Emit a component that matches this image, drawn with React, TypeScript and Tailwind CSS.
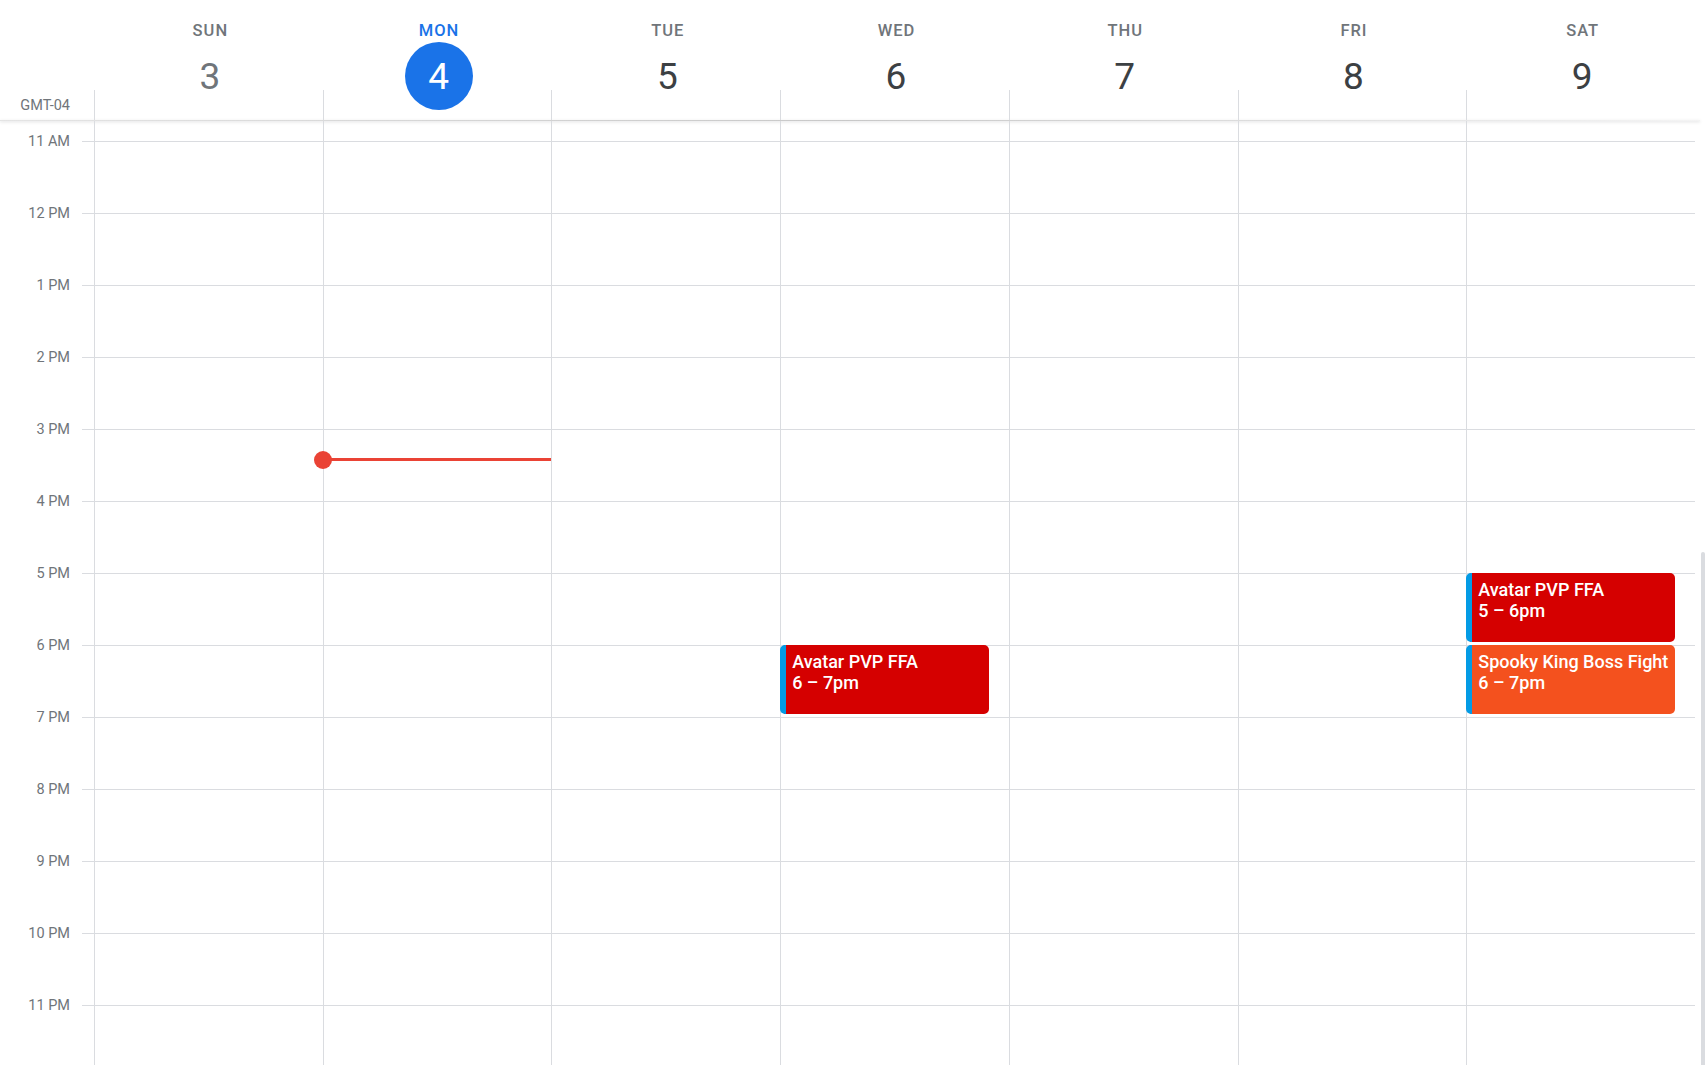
import React from "react";

type Ev = { title: string; time: string; startRow: number; color: string };

const days: { name: string; num: number; today?: boolean; past?: boolean; events: Ev[]; now?: boolean }[] = [
  { name: "SUN", num: 3, past: true, events: [] },
  { name: "MON", num: 4, today: true, events: [], now: true },
  { name: "TUE", num: 5, events: [] },
  { name: "WED", num: 6, events: [{ title: "Avatar PVP FFA", time: "6 – 7pm", startRow: 7, color: "bg-[#d50000]" }] },
  { name: "THU", num: 7, events: [] },
  { name: "FRI", num: 8, events: [] },
  {
    name: "SAT",
    num: 9,
    events: [
      { title: "Avatar PVP FFA", time: "5 – 6pm", startRow: 6, color: "bg-[#d50000]" },
      { title: "Spooky King Boss Fight", time: "6 – 7pm", startRow: 7, color: "bg-[#f4511e]" },
    ],
  },
];

const hours = ["11 AM", "12 PM", "1 PM", "2 PM", "3 PM", "4 PM", "5 PM", "6 PM", "7 PM", "8 PM", "9 PM", "10 PM", "11 PM"];

const eventTops: Record<number, string> = {
  6: "top-[452px]",
  7: "top-[524px]",
};

export default function App() {
  return (
    <div className="relative h-[1065px] w-[1705px] overflow-hidden bg-white font-['Roboto',sans-serif]">
      {/* Header */}
      <div className="flex h-[120px]">
        <div className="flex w-[94px] shrink-0 flex-col justify-end pb-[5px] pr-[24px] text-right text-[14.5px] leading-[18px] text-[#70757a]">
          GMT-04
        </div>
        <div className="flex w-[1601px] shrink-0">
          {days.map((d) => (
            <div key={d.name} className="flex flex-1 flex-col">
              <div className="flex h-[90px] flex-col items-center pl-[3px] pt-[21px]">
                <div
                  className={`pl-[1px] text-[16.5px] font-medium leading-[20px] tracking-[1px] ${
                    d.today ? "text-[#1a73e8]" : "text-[#70757a]"
                  }`}
                >
                  {d.name}
                </div>
                <div
                  className={`mt-[1px] flex h-[68px] w-[68px] shrink-0 items-center justify-center rounded-full text-[37px] leading-none ${
                    d.today ? "bg-[#1a73e8] text-white" : d.past ? "text-[#70757a]" : "text-[#3c4043]"
                  }`}
                >
                  {d.num}
                </div>
              </div>
              <div className="h-[30px] border-l border-[#dadce0]" />
            </div>
          ))}
        </div>
      </div>
      <div className="h-[1px] w-[1700px] bg-gradient-to-r from-[#e4e4e4] via-[#c8c8c8] to-[#f4f4f4] shadow-[0_1px_3px_rgba(60,64,67,0.25)]" />

      {/* Body */}
      <div className="flex h-[944px] overflow-hidden">
        <div className="w-[94px] shrink-0 pt-[20px]">
          {hours.map((h) => (
            <div key={h} className="relative flex h-[72px] items-start">
              <div className="w-[70px] translate-y-[-8px] text-right text-[14.5px] leading-[18px] text-[#70757a]">{h}</div>
              <div className="ml-[12px] h-[1px] flex-1 bg-[#dadce0]" />
            </div>
          ))}
        </div>
        <div className="relative w-[1601px] shrink-0 pt-[20px]">
          {hours.map((h) => (
            <div key={h} className="h-[72px] border-t border-[#dadce0]" />
          ))}
          <div className="absolute inset-0 flex">
            {days.map((d) => (
              <div key={d.name} className="relative flex-1 border-l border-[#dadce0]">
                {d.events.map((e) => (
                  <div
                    key={e.title + e.time}
                    className={`absolute left-[-1px] ${eventTops[e.startRow]} h-[69px] w-[209px] rounded-[5px] border-l-[6px] border-[#039be5] ${e.color} pl-[6px] pt-[6px] text-[18px] font-medium leading-[21px] text-white`}
                  >
                    <div className="whitespace-nowrap">{e.title}</div>
                    <div className="whitespace-nowrap">{e.time}</div>
                  </div>
                ))}
                {d.now && (
                  <>
                    <div className="absolute left-0 right-0 top-[337px] h-[3px] bg-[#ea4335]" />
                    <div className="absolute left-[-10px] top-[330px] h-[18px] w-[18px] rounded-full bg-[#ea4335]" />
                  </>
                )}
              </div>
            ))}
          </div>
        </div>
        <div className="flex w-[10px] shrink-0 justify-end">
          <div className="mt-[431px] h-[600px] w-[4px] rounded-t-full bg-[#dadce0]" />
        </div>
      </div>
    </div>
  );
}
